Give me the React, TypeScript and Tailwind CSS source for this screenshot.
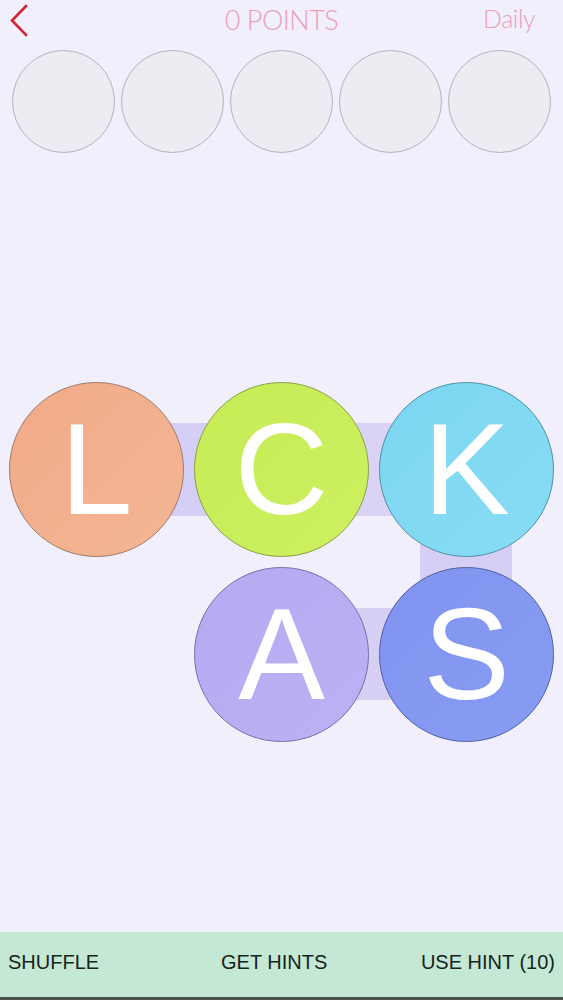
import React from 'react';

const slots = [0, 1, 2, 3, 4];

const tiles = [
  { letter: 'L', cls: 'col-start-1 row-start-1 bg-gradient-to-br from-[#f2aa88] to-[#f3b694] border-[#9c7b6c]' },
  { letter: 'C', cls: 'col-start-2 row-start-1 bg-gradient-to-br from-[#c6ec55] to-[#cdf060] border-[#89a044]' },
  { letter: 'K', cls: 'col-start-3 row-start-1 bg-gradient-to-br from-[#7cd6f1] to-[#88dcf4] border-[#4f8fa6]' },
  { letter: 'A', cls: 'col-start-2 row-start-2 bg-gradient-to-br from-[#b6a9f1] to-[#bdb1f4] border-[#776ea8]' },
  { letter: 'S', cls: 'col-start-3 row-start-2 bg-gradient-to-br from-[#8094f0] to-[#889cf3] border-[#4f5fa6]' },
];

export default function App() {
  return (
    <div className="w-[563px] h-[1000px] bg-[#f0effb] flex flex-col overflow-hidden" style={{ fontFamily: '"Liberation Sans", Arial, sans-serif' }}>
      {/* Header */}
      <header className="relative h-[44px] flex items-center justify-center">
        <button className="absolute left-[9px] top-[4px] w-[22px] h-[34px] flex items-center justify-center">
          <svg width="22" height="34" viewBox="0 0 22 34" fill="none">
            <path d="M17 2 L3 16.5 L17 31" stroke="#d3202f" strokeWidth="2.6" strokeLinecap="square" />
          </svg>
        </button>
        <div className="text-[27px] font-light leading-none text-[#ea9fb7] tracking-[-0.5px] mt-[-5px]" style={{ fontFamily: 'Lato, "Liberation Sans", sans-serif' }}>
          0 POINTS
        </div>
        <div className="absolute right-[28px] top-[6px] text-[25px] font-light leading-none text-[#ea9fb7] tracking-[-0.5px]" style={{ fontFamily: 'Lato, "Liberation Sans", sans-serif' }}>
          Daily
        </div>
      </header>

      {/* Answer slots */}
      <div className="flex gap-[6px] pl-[12px] mt-[6px]">
        {slots.map((s) => (
          <div key={s} className="w-[103px] h-[103px] rounded-full bg-[#ececf3] border-[1.5px] border-[#b3b3bf]" />
        ))}
      </div>

      {/* Board */}
      <div className="relative ml-[9px] mt-[229px] w-[545px] grid grid-cols-[175px_175px_175px] grid-rows-[175px_175px] gap-[10px]">
        <div className="absolute left-[87px] top-[41px] w-[185px] h-[93px] bg-[#d5cef7]" />
        <div className="absolute left-[272px] top-[41px] w-[185px] h-[93px] bg-[#dbd3f6]" />
        <div className="absolute left-[411px] top-[87px] w-[92px] h-[185px] bg-[#d7cef5]" />
        <div className="absolute left-[272px] top-[226px] w-[185px] h-[92px] bg-[#d8cff5]" />
        {tiles.map((t) => (
          <div
            key={t.letter}
            className={`relative rounded-full border-[1.5px] flex items-center justify-center text-white text-[130px] leading-none ${t.cls}`}
          >
            <span className="mt-[-2px]">{t.letter}</span>
          </div>
        ))}
      </div>

      {/* Bottom bar */}
      <footer className="mt-auto h-[68px] bg-[#c5e8d5] border-b-[3px] border-[#46544c] flex items-center px-[8px] pb-[5px] text-[20px] text-[#15241c]">
        <span className="w-[213px]">SHUFFLE</span>
        <span>GET HINTS</span>
        <span className="ml-auto">USE HINT (10)</span>
      </footer>
    </div>
  );
}
